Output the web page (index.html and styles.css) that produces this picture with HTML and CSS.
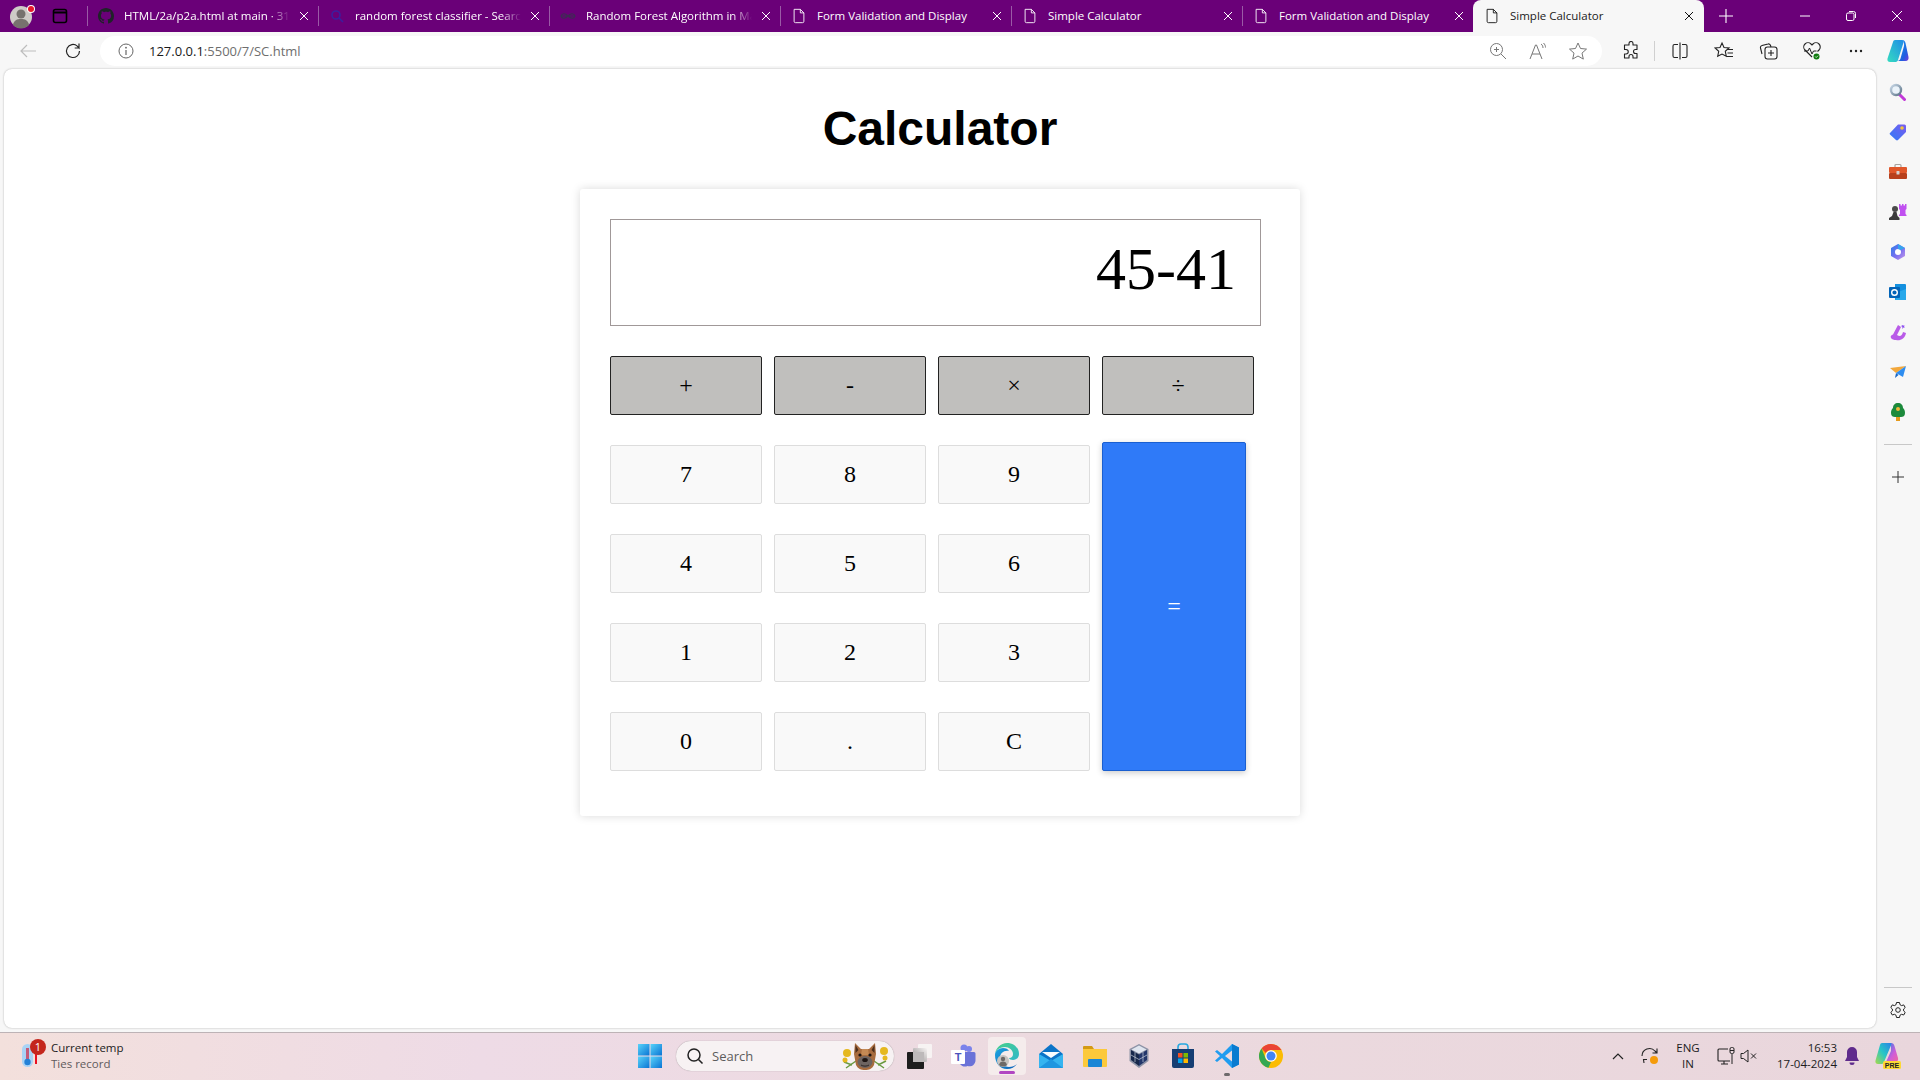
FILE: index.html
```html
<!DOCTYPE html>
<html lang="en">
<head>
<meta charset="utf-8">
<title>Simple Calculator</title>
<link rel="stylesheet" href="styles.css">
</head>
<body>
<svg class="sprite" aria-hidden="true">
  <symbol id="doc" viewBox="0 0 18 18"><path d="M3.5 1.5h7l4 4v9.5a1.5 1.5 0 0 1-1.5 1.5H5A1.5 1.5 0 0 1 3.5 15zM10.5 1.5v4h4" fill="none" stroke="currentColor" stroke-width="1"/></symbol>
  <symbol id="x" viewBox="0 0 12 12"><path d="M2 2l8 8M10 2l-8 8" fill="none" stroke="currentColor" stroke-width="1"/></symbol>
</svg>

<div class="window">
  <header class="tabstrip">
    <div class="profile">
      <svg width="28" height="28" viewBox="0 0 28 28"><circle cx="13" cy="15" r="11" fill="#cfcbc7"/><circle cx="13" cy="12" r="4.5" fill="#77726e"/><path d="M5 23c1-5 4-6 8-6s7 1 8 6a11 11 0 0 1-16 0z" fill="#77726e"/><circle cx="23" cy="7" r="4" fill="#fff"/><circle cx="23" cy="7" r="3" fill="#e8192c"/></svg>
    </div>
    <div class="tabs-btn">
      <svg width="16" height="16" viewBox="0 0 16 16"><rect x="1.5" y="1.5" width="13" height="13" rx="2" fill="none" stroke="#000" stroke-width="1.6"/><path d="M1.5 4.5h13" stroke="#000" stroke-width="2"/></svg>
    </div>

    <div class="tab"><div class="tab-in">
      <svg class="fav" width="16" height="16" viewBox="0 0 16 16"><path fill="#1f2328" d="M8 0C3.58 0 0 3.58 0 8c0 3.54 2.29 6.53 5.47 7.59.4.07.55-.17.55-.38 0-.19-.01-.82-.01-1.49-2.01.37-2.53-.49-2.69-.94-.09-.23-.48-.94-.82-1.13-.28-.15-.68-.52-.01-.53.63-.01 1.08.58 1.23.82.72 1.21 1.87.87 2.33.66.07-.52.28-.87.51-1.07-1.78-.2-3.64-.89-3.64-3.95 0-.87.31-1.59.82-2.15-.08-.2-.36-1.02.08-2.12 0 0 .67-.21 2.2.82.64-.18 1.32-.27 2-.27.68 0 1.36.09 2 .27 1.53-1.04 2.2-.82 2.2-.82.44 1.1.16 1.92.08 2.12.51.56.82 1.27.82 2.15 0 3.07-1.87 3.75-3.65 3.95.29.25.54.73.54 1.48 0 1.07-.01 1.93-.01 2.2 0 .21.15.46.55.38A8.013 8.013 0 0016 8c0-4.42-3.58-8-8-8z"/></svg>
      <span class="tab-title fade">HTML/2a/p2a.html at main · 31</span>
      <svg class="tab-x" width="12" height="12"><use href="#x"/></svg>
    </div></div>
    <div class="tab"><div class="tab-in">
      <svg class="fav" width="16" height="16" viewBox="0 0 16 16"><circle cx="7" cy="7" r="4" fill="none" stroke="#3b1f9e" stroke-width="1.6"/><path d="M10 10l4 4" stroke="#3b1f9e" stroke-width="1.6"/></svg>
      <span class="tab-title fade">random forest classifier - Searc</span>
      <svg class="tab-x" width="12" height="12"><use href="#x"/></svg>
    </div></div>
    <div class="tab"><div class="tab-in">
      <svg class="fav" width="16" height="16" viewBox="0 0 16 16"><path d="M1 8c1-3 4-3 7 0s6 3 7 0c-1-3-4-3-7 0s-6 3-7 0zM1 8h14" fill="none" stroke="#3c2c52" stroke-width="1.1"/></svg>
      <span class="tab-title fade">Random Forest Algorithm in Ma</span>
      <svg class="tab-x" width="12" height="12"><use href="#x"/></svg>
    </div></div>
    <div class="tab"><div class="tab-in">
      <svg class="fav" width="16" height="18"><use href="#doc"/></svg>
      <span class="tab-title">Form Validation and Display</span>
      <svg class="tab-x" width="12" height="12"><use href="#x"/></svg>
    </div></div>
    <div class="tab"><div class="tab-in">
      <svg class="fav" width="16" height="18"><use href="#doc"/></svg>
      <span class="tab-title">Simple Calculator</span>
      <svg class="tab-x" width="12" height="12"><use href="#x"/></svg>
    </div></div>
    <div class="tab"><div class="tab-in">
      <svg class="fav" width="16" height="18"><use href="#doc"/></svg>
      <span class="tab-title">Form Validation and Display</span>
      <svg class="tab-x" width="12" height="12"><use href="#x"/></svg>
    </div></div>
    <div class="tab active"><div class="tab-in">
      <svg class="fav" width="16" height="18"><use href="#doc"/></svg>
      <span class="tab-title">Simple Calculator</span>
      <svg class="tab-x" width="12" height="12"><use href="#x"/></svg>
    </div></div>

    <div class="new-tab"><svg width="16" height="16" viewBox="0 0 16 16"><path d="M8 1v14M1 8h14" stroke="#fff" stroke-width="1.1"/></svg></div>
    <div class="win-controls">
      <div class="win-btn"><svg width="12" height="12" viewBox="0 0 12 12"><path d="M1 6h10" stroke="#fff"/></svg></div>
      <div class="win-btn"><svg width="12" height="12" viewBox="0 0 12 12"><rect x="1.5" y="3" width="7.5" height="7.5" rx="1.5" fill="none" stroke="#fff"/><path d="M4 1.5h4.5a2 2 0 0 1 2 2V8" fill="none" stroke="#fff"/></svg></div>
      <div class="win-btn"><svg width="12" height="12" viewBox="0 0 12 12"><path d="M1 1l10 10M11 1L1 11" stroke="#fff"/></svg></div>
    </div>
  </header>

  <nav class="toolbar">
    <div class="tool-slot nav-slot"><svg width="20" height="20" viewBox="0 0 20 20"><path d="M18 10H3M9 4l-6 6 6 6" fill="none" stroke="#bdbdbd" stroke-width="1.2"/></svg></div>
    <div class="tool-slot nav-slot"><svg width="20" height="20" viewBox="0 0 20 20"><path d="M16.5 10a6.5 6.5 0 1 1-2.2-4.9L16 7V2.6M16 7h-4.3" fill="none" stroke="#222" stroke-width="1.2"/></svg></div>
    <div class="omnibox">
      <svg class="info" width="16" height="16" viewBox="0 0 16 16"><circle cx="8" cy="8" r="7" fill="none" stroke="#666"/><path d="M8 7v5" stroke="#666" stroke-width="1.2"/><circle cx="8" cy="4.7" r=".9" fill="#666"/></svg>
      <span class="url"><span class="url-host">127.0.0.1</span>:5500/7/SC.html</span>
      <div class="omni-icons">
        <div class="omni-slot"><svg width="20" height="20" viewBox="0 0 20 20"><circle cx="8.5" cy="8.5" r="6" fill="none" stroke="#777"/><path d="M13 13l5 5M8.500 6v5M6 8.500h5" stroke="#777"/></svg></div>
        <div class="omni-slot"><svg width="20" height="20" viewBox="0 0 20 20"><path d="M2 18L7.500 4h1L14 18M4 13h8" fill="none" stroke="#777"/><path d="M13 3c1.500 1 2 2.500 2 4M15.500 2c1.500 1.500 2 3 2 4.500" fill="none" stroke="#777"/></svg></div>
        <div class="omni-slot"><svg width="20" height="20" viewBox="0 0 20 20"><path d="M10 2l2.500 5.500 6 .6-4.500 4 1.300 6L10 15l-5.300 3.100 1.300-6-4.500-4 6-.6z" fill="none" stroke="#777"/></svg></div>
      </div>
    </div>
    <div class="tool-right">
      <div class="tool-slot"><svg width="20" height="20" viewBox="0 0 20 20"><path d="M8 2.500a2 2 0 0 1 4 0V4h4v4.500h-1.500a2 2 0 0 0 0 4H16V17h-4v-1.500a2 2 0 0 0-4 0V17H3.500v-4H5a2 2 0 0 0 0-4.500H3.500V4H8z" fill="none" stroke="#222" stroke-width="1.1" stroke-linejoin="round"/></svg></div>
      <div class="tool-sep"></div>
      <div class="tool-slot"><svg width="20" height="20" viewBox="0 0 20 20"><path d="M8 3.500H4.500A1.500 1.500 0 0 0 3 5v10a1.500 1.500 0 0 0 1.500 1.500H8M12 3.500h3.500A1.500 1.500 0 0 1 17 5v10a1.500 1.500 0 0 1-1.500 1.500H12M10 1.500v17" fill="none" stroke="#222" stroke-width="1.1"/></svg></div>
      <div class="tool-slot"><svg width="20" height="20" viewBox="0 0 20 20"><path d="M8 2l2 4.500 5 .5-3.700 3.300 1 5L8 13l-4.300 2.300 1-5L1 7l5-.5zM13 8.500h6M13.500 12h5.500M12.500 15.500h6.500" fill="none" stroke="#222" stroke-width="1.1"/></svg></div>
      <div class="tool-slot"><svg width="20" height="20" viewBox="0 0 20 20"><rect x="7" y="6" width="12" height="12" rx="2.500" fill="none" stroke="#222" stroke-width="1.1"/><path d="M13 9v6M10 12h6M4 13l-1.500-6a2 2 0 0 1 1.500-2.500L10 3a2 2 0 0 1 2.500 1.500L13 6" fill="none" stroke="#222" stroke-width="1.1"/></svg></div>
      <div class="tool-slot"><svg width="20" height="20" viewBox="0 0 20 20"><path d="M10 16L3 9a4 4 0 0 1 6-6l1 1 1-1a4 4 0 0 1 6 6l-1.500 1.500" fill="none" stroke="#222" stroke-width="1.1"/><path d="M2 10h4l1.500-3 2.500 6 1.500-3h3" fill="none" stroke="#222"/><circle cx="14.500" cy="15.500" r="3" fill="#107c10"/><path d="M13.200 15.500l1 1 1.800-1.800" fill="none" stroke="#fff" stroke-width=".8"/></svg></div>
      <div class="tool-slot"><svg width="16" height="4" viewBox="0 0 16 4"><circle cx="3" cy="2" r="1.200" fill="#222"/><circle cx="8" cy="2" r="1.200" fill="#222"/><circle cx="13" cy="2" r="1.200" fill="#222"/></svg></div>
      <div class="tool-slot copilot-slot"><svg width="24" height="28" viewBox="0 0 24 28"><defs><linearGradient id="cpA" x1="0" y1="1" x2="1" y2="0"><stop offset="0" stop-color="#35dcc0"/><stop offset="1" stop-color="#1f8ce8"/></linearGradient><linearGradient id="cpB" x1="0" y1="0" x2="1" y2="1"><stop offset="0" stop-color="#18a0f0"/><stop offset=".7" stop-color="#1f5fe0"/><stop offset="1" stop-color="#7a3bdc"/></linearGradient></defs><path d="M9 3h7c1.500 0 2 1 1.500 2.500L12 23c-.5 1.500-1.500 2-3 2H4c-2 0-3-1.500-2.500-3.500L7 5c.3-1.200 1-2 2-2z" fill="url(#cpA)"/><path d="M16 3c2 0 3 1 3.500 3l3 14c.4 2-.5 4-3 4H11c2 0 3-1 3.500-2.500L18 9c.5-2-.5-6-2-6z" fill="url(#cpB)"/></svg></div>
    </div>
  </nav>

  <div class="main">
    <main class="page">
      <h1 class="title">Calculator</h1>
      <section class="calc">
        <div class="display">45-41</div>
        <div class="keys">
          <button class="key op">+</button>
          <button class="key op">-</button>
          <button class="key op">×</button>
          <button class="key op">÷</button>
          <button class="key">7</button>
          <button class="key">8</button>
          <button class="key">9</button>
          <button class="key equals">=</button>
          <button class="key">4</button>
          <button class="key">5</button>
          <button class="key">6</button>
          <button class="key">1</button>
          <button class="key">2</button>
          <button class="key">3</button>
          <button class="key">0</button>
          <button class="key">.</button>
          <button class="key">C</button>
        </div>
      </section>
    </main>

    <aside class="sidebar">
      <div class="side-slot"><svg width="18" height="18" viewBox="0 0 18 18"><defs><linearGradient id="sgA" x1="0" y1="0" x2="1" y2="1"><stop offset="0" stop-color="#c7d7e6"/><stop offset="1" stop-color="#5d7488"/></linearGradient></defs><path d="M10 11l5.500 5.500" stroke="#c239d8" stroke-width="3" stroke-linecap="round"/><circle cx="7" cy="7" r="5" fill="#eaf3fa" stroke="url(#sgA)" stroke-width="2.400"/></svg></div>
      <div class="side-slot"><svg width="18" height="18" viewBox="0 0 18 18"><defs><linearGradient id="sgB" x1="0" y1="1" x2="1" y2="0"><stop offset="0" stop-color="#2f7bf6"/><stop offset="1" stop-color="#7a5cf0"/></linearGradient></defs><path d="M1 10l8-8.500h6.500a1.500 1.500 0 0 1 1.500 1.500V9l-8 8a1.500 1.500 0 0 1-2 0l-6-5.500a1 1 0 0 1 0-1.500z" fill="url(#sgB)"/><circle cx="13" cy="5" r="1.800" fill="#f5c33b"/></svg></div>
      <div class="side-slot"><svg width="18" height="18" viewBox="0 0 18 18"><path d="M6 4V2.500A1 1 0 0 1 7 1.500h4a1 1 0 0 1 1 1V4" fill="none" stroke="#a8a29e" stroke-width="1.200"/><rect y="4" width="18" height="6" rx="1" fill="#e0572a"/><rect y="10" width="18" height="6" rx="1" fill="#b8401c"/><rect x="7.500" y="8" width="3" height="3.500" rx=".5" fill="#d6d3d1"/></svg></div>
      <div class="side-slot"><svg width="18" height="18" viewBox="0 0 18 18"><path d="M10 1h1.500v1.500H13V1h1.500v1.500H16V1h1.500v5l-1 1v4l1 1v1H10v-1l1-1V7l-1-1z" fill="#c050f0"/><circle cx="6" cy="6" r="3" fill="#4a4a4a"/><path d="M4.500 9h3l1 4 2 2v2H0v-2l3-2z" fill="#3c3c3c"/></svg></div>
      <div class="side-slot"><svg width="18" height="18" viewBox="0 0 18 18"><defs><linearGradient id="sgC" x1="0" y1="0" x2="1" y2="1"><stop offset="0" stop-color="#2b7de9"/><stop offset=".55" stop-color="#7a6ff0"/><stop offset="1" stop-color="#c79be8"/></linearGradient></defs><path d="M9 1l7 4v8l-7 4-7-4V5z" fill="url(#sgC)"/><circle cx="9" cy="9" r="3" fill="#fff"/><path d="M9 1l7 4-4 2-3-1z" fill="#36a3ee"/></svg></div>
      <div class="side-slot"><svg width="18" height="18" viewBox="0 0 18 18"><path d="M6 1h10a1 1 0 0 1 1 1v14a1 1 0 0 1-1 1H6z" fill="#1490df"/><path d="M9 9l8-3v11H6z" fill="#28a8ea"/><rect y="4" width="11" height="11" rx="1" fill="#0364b8"/><circle cx="5.500" cy="9.500" r="2.800" fill="none" stroke="#fff" stroke-width="1.400"/></svg></div>
      <div class="side-slot"><svg width="18" height="18" viewBox="0 0 18 18"><path d="M2 15c-1-2 .5-3 2-3.500L9 2l3 2-4 8c3 2 5 1 6-3l3 1c-1 6-6 8-10 7-2 0-4-.500-5-2z" fill="#b95be8"/><path d="M14 2l1 1 1-1-1 2 1 1-1.500-.5L13 6l.5-2-1.500-1z" fill="#8a4bf0"/></svg></div>
      <div class="side-slot"><svg width="18" height="18" viewBox="0 0 18 18"><path d="M1 5l16-2-10 7z" fill="#f2a73b"/><path d="M7 10L17 3l-3 11z" fill="#2e8df0"/><path d="M7 10l-1 5 3.500-3z" fill="#1666c6"/></svg></div>
      <div class="side-slot"><svg width="18" height="18" viewBox="0 0 18 18"><rect x="7" y="13" width="4" height="5" fill="#e59a1c"/><path d="M9 0c3 0 5 2 5 5 1.500 1 2 3 2 5 0 3-2 4-4 4H6c-2 0-4-1-4-4 0-2 .5-4 2-5 0-3 2-5 5-5z" fill="#1c8a3c"/><circle cx="9" cy="6" r="2" fill="#f0b93a"/></svg></div>
      <div class="side-sep"></div>
      <div class="side-slot"><svg width="16" height="16" viewBox="0 0 16 16"><path d="M8 2v12M2 8h12" stroke="#333"/></svg></div>
      <div class="side-bottom">
        <div class="side-sep-low"></div>
        <div class="side-slot"><svg width="18" height="18" viewBox="0 0 18 18"><path d="M7.500 1.500h3l.5 2.200 1.600.9 2.100-.7 1.500 2.600-1.600 1.500v1.900l1.600 1.500-1.500 2.600-2.100-.7-1.600.9-.5 2.300h-3l-.5-2.300-1.600-.9-2.100.7-1.500-2.600 1.600-1.500V8l-1.600-1.500 1.500-2.600 2.100.7L7 3.700z" fill="none" stroke="#222" stroke-linejoin="round"/><circle cx="9" cy="9" r="2.300" fill="none" stroke="#222"/></svg></div>
      </div>
    </aside>
  </div>

  <footer class="taskbar">
    <div class="widget">
      <div class="widget-icon">
        <svg class="temp-ico" width="24" height="32" viewBox="0 0 24 32"><rect x="0" y="4" width="11" height="23" rx="5.500" fill="#a9d3f5"/><rect x="4" y="8" width="3" height="13" fill="#c45a78"/><circle cx="5.500" cy="22" r="3.200" fill="#2481d7"/><path d="M14 14v10" stroke="#e81123" stroke-width="2"/><circle cx="16" cy="7" r="8" fill="#c4261d"/><text x="16" y="11" class="badge-num">1</text></svg>
      </div>
      <div class="widget-text">
        <div class="widget-main">Current temp</div>
        <div class="widget-sub">Ties record</div>
      </div>
    </div>

    <div class="tb-slot start">
      <svg width="24" height="24" viewBox="0 0 24 24"><defs><linearGradient id="wA" x1="0" y1="0" x2="1" y2="1"><stop offset="0" stop-color="#58d3fa"/><stop offset="1" stop-color="#0a74d4"/></linearGradient></defs><rect width="11.500" height="11.500" fill="url(#wA)"/><rect x="12.500" width="11.500" height="11.500" fill="url(#wA)"/><rect y="12.500" width="11.500" height="11.500" fill="url(#wA)"/><rect x="12.500" y="12.500" width="11.500" height="11.500" fill="url(#wA)"/></svg>
    </div>
    <div class="tb-search">
      <svg class="search-ico" width="18" height="18" viewBox="0 0 18 18"><circle cx="8" cy="8" r="6" fill="none" stroke="#222" stroke-width="1.500"/><path d="M12.500 12.500L16.500 16.500" stroke="#222" stroke-width="1.600"/></svg>
      <span class="search-text">Search</span>
      <svg class="doodle" width="48" height="30" viewBox="0 0 48 30"><path d="M5 27l10-7M43 27l-10-7M3 21l8 3M45 20l-8 4" stroke="#6a9a42" stroke-width="1.500"/><g fill="#e5b81f"><circle cx="6" cy="12" r="4"/><circle cx="4" cy="19" r="2.500"/><circle cx="43" cy="10" r="4"/><circle cx="44" cy="17" r="2.500"/></g><path d="M14 2l6 6h8l6-6 1 11-2 11c-2 4-5 5-9 5s-7-1-9-5l-2-11z" fill="#a86c3e"/><path d="M14.500 4l3 5-3 3zM33.500 4l-3 5 3 3z" fill="#4a2e1c"/><path d="M21 8h6l1 6h-8z" fill="#c48a55"/><ellipse cx="24" cy="21" rx="7.500" ry="6" fill="#6d6461"/><circle cx="19" cy="14" r="1.600" fill="#1b1311"/><circle cx="29" cy="14" r="1.600" fill="#1b1311"/><ellipse cx="24" cy="19" rx="2.800" ry="2" fill="#1b1311"/><path d="M20 24c2 1.500 6 1.500 8 0" fill="none" stroke="#2e2523"/></svg>
    </div>

    <div class="tb-apps">
      <div class="tb-slot"><svg width="26" height="26" viewBox="0 0 26 26"><defs><linearGradient id="tvA" x1="0" y1="1" x2="1" y2="0"><stop offset="0" stop-color="#8d8a8b"/><stop offset="1" stop-color="#f7f3f3"/></linearGradient></defs><rect x="12" y="1" width="14" height="14" rx="1" fill="#f7f3f3"/><rect x="7" y="5" width="14" height="14" rx="1" fill="url(#tvA)"/><rect x="1" y="9" width="17" height="17" rx="1" fill="#1d1d1d"/><rect x="7" y="9" width="11" height="10" fill="#bdb9ba"/></svg></div>
      <div class="tb-slot"><svg width="26" height="26" viewBox="0 0 26 26"><circle cx="19" cy="6" r="3" fill="#7b83eb"/><circle cx="14" cy="5" r="3.500" fill="#7b83eb"/><path d="M9 9h15a1.500 1.500 0 0 1 1.500 1.500V17a6 6 0 0 1-8 6 6 6 0 0 1-8.500-5z" fill="#6a72d8"/><rect x="1" y="7" width="14" height="14" rx="1" fill="#fff"/><text x="8" y="18" class="teams-t">T</text></svg></div>
      <div class="tb-slot">
        <div class="edge-tile">
          <svg width="26" height="28" viewBox="0 0 26 28"><defs><linearGradient id="eA" x1="0" y1="0" x2="1" y2="1"><stop offset="0" stop-color="#47d08a"/><stop offset="1" stop-color="#2fb8c9"/></linearGradient><linearGradient id="eB" x1="0" y1="0" x2="1" y2="1"><stop offset="0" stop-color="#1ea6e0"/><stop offset="1" stop-color="#0a5fb8"/></linearGradient></defs><path d="M1 13C1 6 7 1 13 1c7 0 12 5 12 11 0 4-3 6-6 6-2 0-4-1-4-2 3 0 4-2 4-4 0-4-4-7-8-7-6 0-10 4-10 8z" fill="url(#eA)"/><path d="M1 13c0-4 4-7 8-7 3 0 5 1 6 3-5-1-9 2-9 7 0 5 4 9 9 9 3 0 6-1 8-3-2 3-6 5-10 5-7 0-12-6-12-14z" fill="url(#eB)"/><circle cx="9" cy="19" r="6" fill="#c6c3c0"/><circle cx="9" cy="17" r="2.200" fill="#6d6967"/><path d="M5 23c.5-2.500 2-3.500 4-3.500s3.500 1 4 3.500a6 6 0 0 1-8 0z" fill="#6d6967"/></svg>
          <span class="edge-bar"></span>
        </div>
      </div>
      <div class="tb-slot"><svg width="24" height="24" viewBox="0 0 24 24"><path d="M0 10L12 0l12 10v14H0z" fill="#0b74c8"/><path d="M0 10l12 7 12-7v14H0z" fill="#35b4f0"/><path d="M0 24l12-9 12 9z" fill="#1e96e0"/><path d="M3 8h18l-9 6z" fill="#f7fcff"/></svg></div>
      <div class="tb-slot"><svg width="24" height="24" viewBox="0 0 24 24"><path d="M0 3a1 1 0 0 1 1-1h8l2 3H0z" fill="#d49a14"/><path d="M0 5h24v17a1 1 0 0 1-1 1H1a1 1 0 0 1-1-1z" fill="#fcc93b"/><rect x="5" y="15" width="14" height="8" rx="1" fill="#1a86d6"/></svg></div>
      <div class="tb-slot"><svg width="22" height="26" viewBox="0 0 22 26"><path d="M11 1l9.500 5v12L11 25l-9.500-7V6z" fill="#8d93a6"/><path d="M3 7l8 4.500v11.500l-8-6z" fill="#17284b"/><path d="M19 7l-8 4.500v11.500l8-6z" fill="#22366a"/><path d="M11 2.500L18.500 6.500 11 10.500 3.500 6.500z" fill="#dfe5ef"/><path d="M7 9v10M15 9v10M3 12l8 4.500 8-4.500" fill="none" stroke="#c9d0dc" stroke-width=".7"/></svg></div>
      <div class="tb-slot"><svg width="24" height="26" viewBox="0 0 24 26"><path d="M7 6V4a3 3 0 0 1 3-3h4a3 3 0 0 1 3 3v2" fill="none" stroke="#28a8e0" stroke-width="1.600"/><path d="M1 6h22v17a2 2 0 0 1-2 2H3a2 2 0 0 1-2-2z" fill="#163e73"/><rect x="7" y="10" width="4.500" height="4.500" fill="#f25022"/><rect x="12.500" y="10" width="4.500" height="4.500" fill="#7fba00"/><rect x="7" y="15.500" width="4.500" height="4.500" fill="#00a4ef"/><rect x="12.500" y="15.500" width="4.500" height="4.500" fill="#ffb900"/></svg></div>
      <div class="tb-slot">
        <div class="code-wrap">
          <svg width="26" height="26" viewBox="0 0 26 26"><path d="M18 1l7 3.500v17L18 25 8 15l-5 4-2-1.500L6 13 1 8.500 3 7l5 4z" fill="#1f9cf0"/><path d="M18 1l7 3.500v17L18 25z" fill="#0a7bd0"/><path d="M18 7.500L11 13l7 5.500z" fill="#eddbe0"/></svg>
          <span class="code-dot"></span>
        </div>
      </div>
      <div class="tb-slot"><svg width="26" height="26" viewBox="0 0 26 26"><circle cx="13" cy="13" r="12" fill="#fbbc04"/><path d="M13 1a12 12 0 0 1 10.400 6H13a6 6 0 0 0-5.200 3L3.600 5.500A12 12 0 0 1 13 1z" fill="#ea4335"/><path d="M3.600 5.500L7.800 16a6 6 0 0 0 5.200 3l-2.600 5.700A12 12 0 0 1 3.600 5.500z" fill="#34a853"/><circle cx="13" cy="13" r="5.800" fill="#fff"/><circle cx="13" cy="13" r="4.500" fill="#4285f4"/></svg></div>
    </div>

    <div class="tray">
      <div class="tray-chev"><svg width="12" height="8" viewBox="0 0 12 8"><path d="M1 7l5-5 5 5" fill="none" stroke="#222" stroke-width="1.200"/></svg></div>
      <div class="tray-sync"><svg width="20" height="20" viewBox="0 0 20 20"><path d="M2 10a7.500 7.500 0 0 1 13-5l2 2M17 2.500V7h-4.500M4 17l-.5-3.500H7" fill="none" stroke="#222" stroke-width="1.100"/><circle cx="14" cy="14" r="4" fill="#f59b0b"/></svg></div>
      <div class="tray-lang"><div>ENG</div><div>IN</div></div>
      <div class="tray-net"><svg width="18" height="20" viewBox="0 0 18 20"><path d="M11 3H2a1 1 0 0 0-1 1v10a1 1 0 0 0 1 1h11M7 15v3M4 18h7" fill="none" stroke="#222" stroke-width="1.100"/><rect x="13" y="1.500" width="4" height="6" rx="1.500" fill="none" stroke="#222"/><path d="M13 4.500h4M15 8v10" stroke="#222"/></svg></div>
      <div class="tray-vol"><svg width="18" height="14" viewBox="0 0 18 14"><path d="M1 4.500h2.500L8 1v12L3.500 9.500H1zM11 4.500l5 5M16 4.500l-5 5" fill="none" stroke="#222"/></svg></div>
      <div class="tray-clock"><div>16:53</div><div>17-04-2024</div></div>
      <div class="tray-bell"><svg width="16" height="20" viewBox="0 0 16 20"><path d="M8 1a5 5 0 0 1 5 5v5l2 4H1l2-4V6a5 5 0 0 1 5-5z" fill="#5f2b8c"/><path d="M5.500 16.500a2.500 2.500 0 0 0 5 0z" fill="#5f2b8c"/></svg></div>
      <div class="tray-copilot"><svg width="28" height="28" viewBox="0 0 28 28"><defs><linearGradient id="cpC" x1="0" y1="1" x2="1" y2="0"><stop offset="0" stop-color="#a7d94a"/><stop offset=".5" stop-color="#27c6c6"/><stop offset="1" stop-color="#2b7fe8"/></linearGradient><linearGradient id="cpD" x1="0" y1="0" x2="1" y2="1"><stop offset="0" stop-color="#2b7fe8"/><stop offset=".6" stop-color="#d05cd8"/><stop offset="1" stop-color="#f0699a"/></linearGradient></defs><path d="M8 1h10L10 20c-.5 1.500-1.500 2-3 2H4c-2 0-3-1.500-2.500-3.500L6 3c.3-1.200 1-2 2-2z" fill="url(#cpC)"/><path d="M17 1c2 0 3 1 3.500 3l3.500 12c.5 2-.5 4-3 4h-9l5-11z" fill="url(#cpD)"/><rect x="9" y="19" width="18" height="8" rx="1.500" fill="#fdd835"/><text x="18" y="25.500" class="pre-text">PRE</text></svg></div>
    </div>
  </footer>
</div>
</body>
</html>
```

FILE: styles.css
```css
* { box-sizing: border-box; }
html, body { margin: 0; padding: 0; height: 100%; }
body { font-family: "Open Sans", "Noto Sans", sans-serif; overflow: hidden; }
.sprite { display: none; }
svg { display: block; flex: none; }

.window { width: 1920px; height: 1080px; display: flex; flex-direction: column; background: #f7f7f7; }

/* Tab strip */
.tabstrip { height: 32px; flex: none; display: flex; align-items: center; background: #6a0078; color: #fff; }
.profile { width: 44px; height: 32px; display: flex; align-items: center; justify-content: center; }
.tabs-btn { width: 43px; height: 32px; display: flex; align-items: center; justify-content: center; padding-right: 11px; }
.tab { width: 231px; height: 32px; display: flex; align-items: center; flex: none; }
.tab-in { width: 100%; height: 20px; display: flex; align-items: center; border-left: 1px solid #9a5aa6; padding-left: 10px; padding-right: 8px; }
.fav { margin-right: 10px; width: 16px; color: #fff; }
.tab-title { flex: 1; min-width: 0; margin-bottom: 2px; font-size: 11.5px; white-space: nowrap; }
.fade { -webkit-mask-image: linear-gradient(90deg, #000 88%, transparent 100%); mask-image: linear-gradient(90deg, #000 88%, transparent 100%); }
.tab-x { color: #fff; margin-left: 8px; }
.tab.active { background: #f7f7f7; color: #222; border-radius: 8px 8px 0 0; }
.tab.active .tab-in { border-left: 0; padding-left: 11px; padding-right: 9px; }
.tab.active .fav, .tab.active .tab-x { color: #111; }
.new-tab { width: 44px; height: 32px; display: flex; align-items: center; justify-content: center; }
.win-controls { margin-left: auto; display: flex; }
.win-btn { width: 46px; height: 32px; display: flex; align-items: center; justify-content: center; }

/* Toolbar */
.toolbar { height: 37px; flex: none; display: flex; align-items: flex-start; padding: 4px 0 0 5px; background: #f7f7f7; }
.tool-slot { width: 44px; height: 30px; flex: none; display: flex; align-items: center; justify-content: center; }
.nav-slot { width: 45px; }
.copilot-slot { margin-left: -2px; }
.omnibox { width: 1502px; height: 30px; flex: none; margin-left: 5px; display: flex; align-items: center; background: #fff; border-radius: 15px; padding: 0 4px 0 18px; }
.info { margin-right: 15px; }
.url { font-size: 13px; color: #6e6e6e; white-space: nowrap; }
.url-host { color: #1a1a1a; }
.omni-icons { margin-left: auto; display: flex; }
.omni-slot { width: 40px; height: 30px; display: flex; align-items: center; justify-content: center; }
.tool-right { flex: 1; display: flex; justify-content: flex-end; align-items: center; }
.tool-sep { width: 1px; height: 20px; background: #d0d0d0; margin: 0 3px 0 1px; flex: none; }

/* Main area */
.main { flex: 1; min-height: 0; display: flex; }
.page { flex: 1; min-width: 0; margin: 0 0 4px 4px; background: #fff; border-radius: 8px; box-shadow: 0 0 2px rgba(0, 0, 0, .3); display: flex; flex-direction: column; align-items: center; }
.title { margin: 32px 0 33px; font-family: "Liberation Sans", Arial, sans-serif; font-size: 48px; font-weight: 700; color: #000; text-align: center; }

.calc { width: 720px; height: 627px; padding: 30px 30px 45px; background: #fff; border-radius: 3px; box-shadow: 0 0 10px rgba(0, 0, 0, .15); }
.display { width: 651px; height: 107px; margin-bottom: 30px; display: flex; align-items: center; justify-content: flex-end; padding: 0 24px 7px 0; border: 1px solid #a09898; font-family: "Liberation Serif", "Times New Roman", serif; font-size: 60px; color: #000; }
.keys { display: grid; grid-template-columns: repeat(4, 152px); grid-auto-rows: 59px; column-gap: 12px; row-gap: 30px; }
.key { padding: 0; font-family: "Liberation Serif", "Times New Roman", serif; font-size: 24px; color: #000; background: #f9f9f9; border: 1px solid #ddd; border-radius: 2px; }
.key.op { background: #c0bfbd; border-color: #222; }
.key.equals { grid-column: 4; grid-row: 2 / 6; width: 144px; margin-top: -3px; background: #2f7af8; border-color: #1a5fd0; color: #fff; box-shadow: 0 2px 6px rgba(0, 0, 0, .2); }

/* Sidebar */
.sidebar { width: 44px; flex: none; display: flex; flex-direction: column; align-items: center; padding-top: 3px; }
.side-slot { width: 44px; height: 40px; flex: none; display: flex; align-items: center; justify-content: center; }
.side-sep { width: 28px; height: 1px; background: #c8c8c8; margin: 12px 0 12px; flex: none; }
.side-bottom { margin-top: auto; display: flex; flex-direction: column; align-items: center; padding-bottom: 2px; }
.side-sep-low { width: 28px; height: 1px; background: #c8c8c8; margin-bottom: 2px; }

/* Taskbar */
.taskbar { height: 48px; flex: none; display: flex; align-items: center; padding-bottom: 2px; border-top: 1px solid #bdb3b6; background: linear-gradient(90deg, #f3e0dc 0%, #eedbe6 25%, #ecdadf 55%, #e9d6dc 100%); }
.widget { width: 633px; height: 45px; flex: none; display: flex; align-items: center; padding-left: 22px; }
.widget-icon { width: 29px; flex: none; }
.temp-ico { overflow: visible; }
.badge-num { font-family: "Open Sans", sans-serif; font-size: 11px; fill: #fff; text-anchor: middle; }
.widget-text { display: flex; flex-direction: column; gap: 1px; }
.widget-main { font-size: 11.5px; line-height: 15px; color: #1c1c1c; }
.widget-sub { font-size: 11.5px; line-height: 15px; color: #5f5a5c; }
.tb-slot { width: 44px; height: 45px; flex: none; display: flex; align-items: center; justify-content: center; }
.tb-slot.start { width: 34px; }
.tb-search { width: 218px; height: 30px; flex: none; margin-left: 9px; display: flex; align-items: center; padding-left: 10px; background: #f7f2f3; border-radius: 15px; box-shadow: 0 0 1px rgba(0, 0, 0, .4); }
.search-ico { margin-right: 8px; }
.search-text { font-size: 13px; color: #5c5c5c; }
.doodle { margin-left: auto; margin-right: 5px; }
.tb-apps { display: flex; margin-left: 3px; }
.edge-tile { position: relative; width: 38px; height: 38px; display: flex; align-items: center; justify-content: center; background: #f5ecec; border-radius: 4px; }
.edge-bar { position: absolute; left: 11px; bottom: 1px; width: 16px; height: 3px; background: #b146c2; border-radius: 2px; }
.code-wrap { position: relative; }
.code-dot { position: absolute; left: 10px; bottom: -7px; width: 6px; height: 3px; background: #6e6a6c; border-radius: 2px; }
.teams-t { font-family: "Liberation Sans", sans-serif; font-size: 11px; font-weight: 700; fill: #4b53bc; text-anchor: middle; }

.tray { margin-left: auto; display: flex; align-items: center; padding-right: 11px; height: 45px; font-size: 12px; color: #1c1c1c; }
.tray-chev, .tray-sync, .tray-net, .tray-vol, .tray-bell, .tray-copilot { display: flex; align-items: center; justify-content: center; }
.tray-chev { width: 28px; }
.tray-sync { width: 36px; }
.tray-lang { width: 40px; text-align: center; line-height: 16px; font-size: 11.5px; }
.tray-net { width: 36px; }
.tray-vol { width: 10px; }
.tray-clock { width: 83px; text-align: right; line-height: 16px; font-size: 11.5px; }
.tray-bell { width: 30px; }
.tray-copilot { width: 42px; }
.pre-text { font-family: "Liberation Sans", sans-serif; font-size: 7px; font-weight: 700; fill: #222; text-anchor: middle; }
```
